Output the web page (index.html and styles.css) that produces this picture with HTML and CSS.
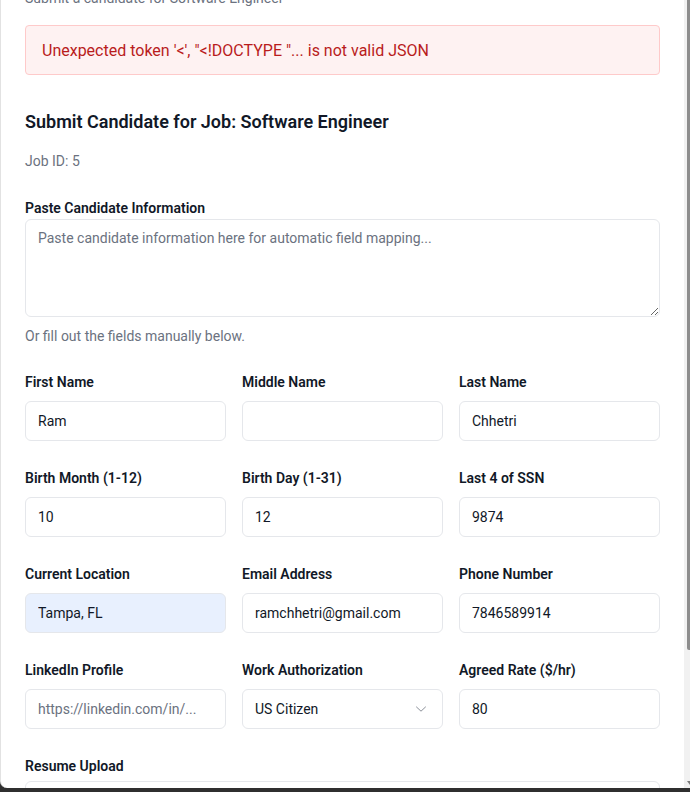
FILE: index.html
```html
<!DOCTYPE html>
<html lang="en">
<head>
<meta charset="utf-8">
<title>Submit Candidate</title>
<link rel="stylesheet" href="styles.css">
</head>
<body>
<div class="modal">
  <div class="content">
    <p class="subtitle">Submit a candidate for Software Engineer</p>
    <div class="error">Unexpected token '&lt;', "&lt;!DOCTYPE "... is not valid JSON</div>

    <h2 class="title">Submit Candidate for Job: Software Engineer</h2>
    <p class="job-id">Job ID: 5</p>

    <label class="label label-paste" for="paste">Paste Candidate Information</label>
    <textarea id="paste" class="textarea" placeholder="Paste candidate information here for automatic field mapping..."></textarea>
    <p class="hint">Or fill out the fields manually below.</p>

    <div class="grid">
      <div class="field">
        <label class="label">First Name</label>
        <input class="input" type="text" value="Ram">
      </div>
      <div class="field">
        <label class="label">Middle Name</label>
        <input class="input" type="text" value="">
      </div>
      <div class="field">
        <label class="label">Last Name</label>
        <input class="input" type="text" value="Chhetri">
      </div>

      <div class="field">
        <label class="label">Birth Month (1-12)</label>
        <input class="input" type="text" value="10">
      </div>
      <div class="field">
        <label class="label">Birth Day (1-31)</label>
        <input class="input" type="text" value="12">
      </div>
      <div class="field">
        <label class="label">Last 4 of SSN</label>
        <input class="input" type="text" value="9874">
      </div>

      <div class="field">
        <label class="label">Current Location</label>
        <input class="input input-autofill" type="text" value="Tampa, FL">
      </div>
      <div class="field">
        <label class="label">Email Address</label>
        <input class="input" type="text" value="ramchhetri@gmail.com">
      </div>
      <div class="field">
        <label class="label">Phone Number</label>
        <input class="input" type="text" value="7846589914">
      </div>

      <div class="field">
        <label class="label">LinkedIn Profile</label>
        <input class="input" type="text" placeholder="https://linkedin.com/in/...">
      </div>
      <div class="field">
        <label class="label">Work Authorization</label>
        <div class="select-wrap">
          <select class="input select">
            <option>US Citizen</option>
            <option>Green Card</option>
            <option>H1B</option>
          </select>
          <svg class="chevron" width="12" height="8" viewBox="0 0 12 8" aria-hidden="true">
            <path d="M1.5 2 L6 6.2 L10.5 2" fill="none" stroke="#8b9099" stroke-width="1" stroke-linecap="round" stroke-linejoin="round"/>
          </svg>
        </div>
      </div>
      <div class="field">
        <label class="label">Agreed Rate ($/hr)</label>
        <input class="input" type="text" value="80">
      </div>
    </div>

    <div class="upload">
      <label class="label label-upload">Resume Upload</label>
      <div class="upload-box"></div>
    </div>
  </div>
  <div class="scrollbar">
    <div class="thumb"></div>
    <div class="arrow"></div>
  </div>
</div>
</body>
</html>
```
FILE: styles.css
```css
html, body {
  margin: 0;
  padding: 0;
}
body {
  background: #2f2f2f;
  height: 792px;
  overflow: hidden;
  font-family: Roboto, "Liberation Sans", Arial, sans-serif;
  color: #111827;
}
.modal {
  display: flex;
  height: 788px;
  background: #ffffff;
  border-left: 1px solid #e2e2e2;
  border-bottom-left-radius: 7px;
  overflow: hidden;
  box-sizing: border-box;
}
.content {
  flex: 1;
  padding: 0 24px;
  overflow: hidden;
}
.subtitle {
  margin: -12px 0 17px;
  font-size: 14px;
  line-height: 20px;
  color: #6b7280;
}
.error {
  background: #fef2f2;
  border: 1px solid #fecaca;
  border-radius: 4px;
  color: #b91c1c;
  font-size: 16px;
  line-height: 24px;
  padding: 13px 16px 11px;
  margin-bottom: 33px;
}
.title {
  margin: 0;
  font-size: 18px;
  line-height: 28px;
  font-weight: 600;
  color: #111827;
}
.job-id {
  margin: 15px 0 27px;
  font-size: 14px;
  line-height: 20px;
  color: #6b7280;
}
.label {
  display: block;
  font-size: 14px;
  line-height: 20px;
  font-weight: 600;
  color: #111827;
  margin-bottom: 9px;
}
.label-paste {
  margin-bottom: 1px;
}
.textarea {
  display: block;
  width: 100%;
  height: 98px;
  box-sizing: border-box;
  border: 1px solid #e5e7eb;
  border-radius: 6px;
  padding: 8px 12px;
  font-family: inherit;
  font-size: 14px;
  line-height: 20px;
  color: #111827;
  resize: vertical;
  outline: none;
}
.textarea::placeholder,
.input::placeholder {
  color: #6b7280;
  opacity: 1;
}
.hint {
  margin: 9px 0 26px;
  font-size: 14px;
  line-height: 20px;
  color: #6b7280;
}
.grid {
  display: grid;
  grid-template-columns: repeat(3, 1fr);
  column-gap: 16px;
  row-gap: 27px;
}
.field {
  min-width: 0;
}
.input {
  display: block;
  width: 100%;
  height: 40px;
  box-sizing: border-box;
  border: 1px solid #e5e7eb;
  border-radius: 6px;
  padding: 0 12px;
  font-family: inherit;
  font-size: 14px;
  color: #111827;
  background: #ffffff;
  outline: none;
}
.input-autofill {
  background: #e8f0fe;
}
.select-wrap {
  position: relative;
}
.select {
  appearance: none;
  -webkit-appearance: none;
}
.chevron {
  position: absolute;
  right: 16px;
  top: 16px;
  pointer-events: none;
}
.upload {
  margin-top: 27px;
}
.label-upload {
  margin-bottom: 5px;
}
.upload-box {
  height: 80px;
  border: 1px solid #e5e7eb;
  border-radius: 6px;
}
.scrollbar {
  width: 6px;
  flex: none;
  background: #f1f1f1;
  position: relative;
  padding-left: 3px;
  box-sizing: border-box;
}
.thumb {
  height: 650px;
  background: #8d8d8d;
  border-bottom-left-radius: 2px;
}
.arrow {
  position: absolute;
  left: 3px;
  bottom: 3px;
  width: 0;
  height: 0;
  border-left: 3px solid transparent;
  border-right: 0 solid transparent;
  border-top: 4px solid #7a7a7a;
}
```
